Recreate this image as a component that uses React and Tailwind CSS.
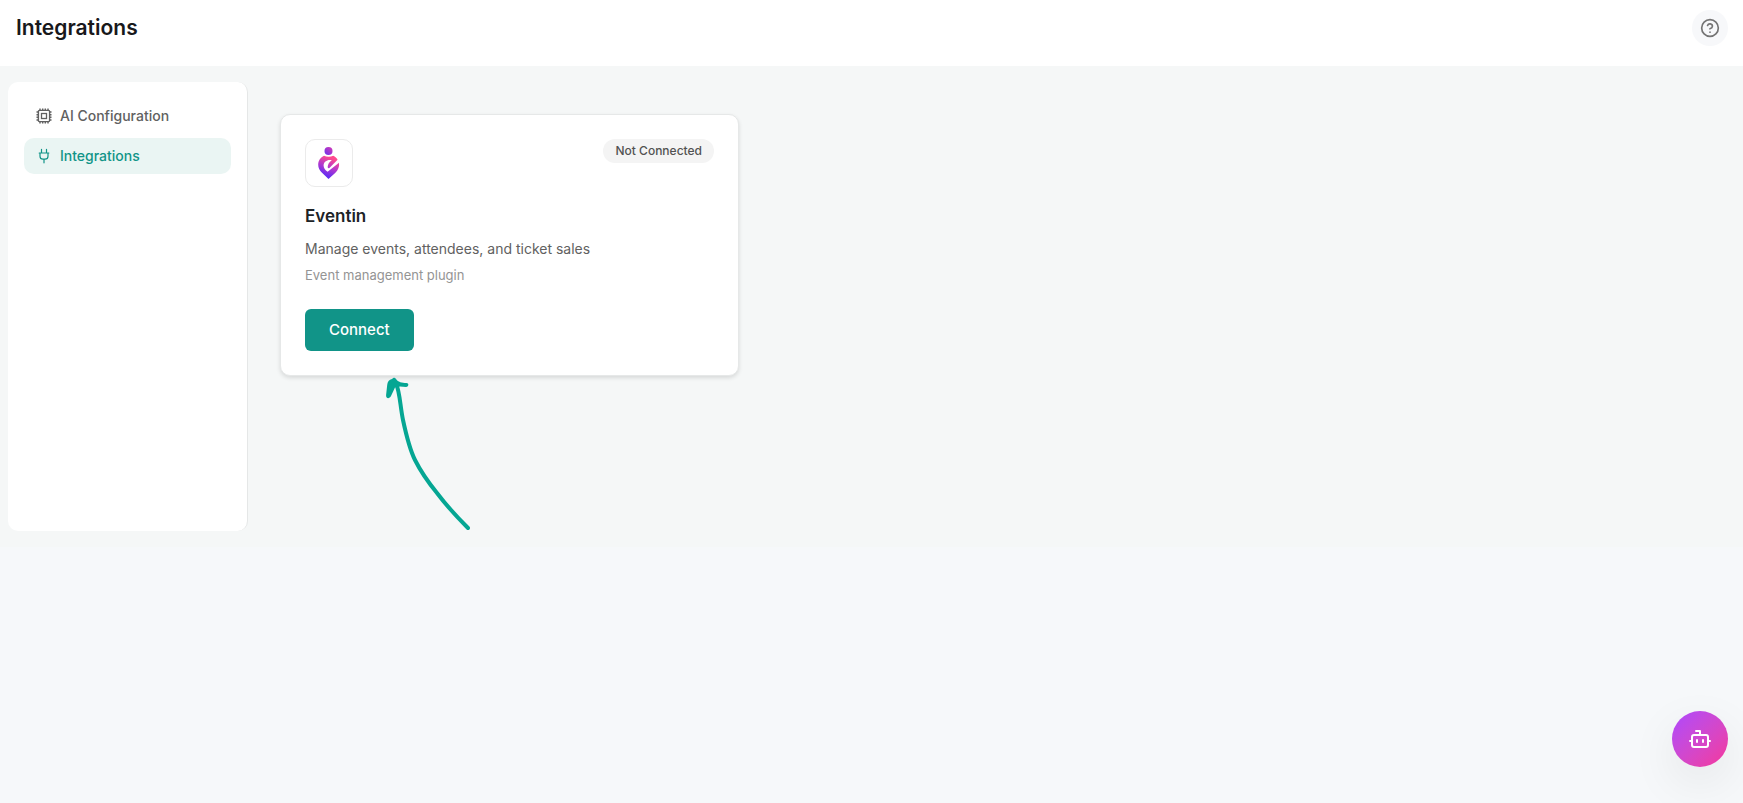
import React from "react";
import { Bot, CircleHelp } from "lucide-react";

const integrations = [
  {
    name: "Eventin",
    description: "Manage events, attendees, and ticket sales",
    type: "Event management plugin",
    connected: false,
  },
];

function ChipIcon() {
  return (
    <svg viewBox="0 0 16 16" className="size-4" fill="none" stroke="currentColor" aria-hidden="true">
      <rect x="2.4" y="2.4" width="11.2" height="11.2" rx="1" strokeWidth="1.4" />
      <rect x="5.5" y="5.5" width="5" height="5" strokeWidth="1.3" />
      <path
        d="M4 .5v2M6.7 .5v2M9.3 .5v2M12 .5v2M4 13.5v2M6.7 13.5v2M9.3 13.5v2M12 13.5v2M.5 4h2M.5 6.7h2M.5 9.3h2M.5 12h2M13.5 4h2M13.5 6.7h2M13.5 9.3h2M13.5 12h2"
        strokeWidth="1.4"
      />
    </svg>
  );
}

function PlugIcon() {
  return (
    <svg
      viewBox="0 0 16 16"
      className="size-4"
      fill="none"
      stroke="currentColor"
      strokeWidth="1.2"
      strokeLinecap="round"
      strokeLinejoin="round"
      aria-hidden="true"
    >
      <path d="M5.5 1.3v3.6M10.5 1.3v3.6M3.2 5h9.6M4 5v3.2c0 1.8 1.2 3 3 3h2c1.8 0 3-1.2 3-3V5M8 11.2v3.6" />
    </svg>
  );
}

function EventinLogo() {
  return (
    <svg viewBox="0 0 22 32" className="h-8 w-[22px]" aria-hidden="true">
      <defs>
        <linearGradient id="head" x1="0" y1="1" x2="1" y2="0">
          <stop stopColor="#6a2ff0" />
          <stop offset="1" stopColor="#d63bb4" />
        </linearGradient>
        <linearGradient id="pin" x1="0.3" y1="1" x2="0.7" y2="0">
          <stop offset="0.1" stopColor="#5b2cf5" />
          <stop offset="0.5" stopColor="#b138cf" />
          <stop offset="0.9" stopColor="#ff4a8d" />
        </linearGradient>
      </defs>
      <circle cx="10.5" cy="4" r="4" fill="url(#head)" />
      {/* outer pin with the spiral of the "e" left open */}
      <path
        d="M6 8.8C8.6 10 12.6 10 15.2 8.8C17.2 9.6 18.8 11 19.6 12.8L11.4 21C10.4 21.6 9.6 21 9.7 19.8C9.9 17 11 15.2 13.8 13.2C9.4 12.2 5.6 14.6 5.6 18.6C5.6 21 7.2 23.6 9.6 24.8L21 15.8C21.6 19.8 20 23.4 17.4 25.8L10.5 32L4 25.8C1.6 23.4 .2 21 .2 17.8C.2 13.6 2.6 10.4 6 8.8Z"
        fill="url(#pin)"
      />
    </svg>
  );
}

function HandDrawnArrow() {
  return (
    <svg
      viewBox="0 0 84 156"
      className="pointer-events-none absolute top-full left-[105px] h-[156px] w-[84px]"
      fill="none"
      aria-hidden="true"
    >
      <path
        d="M10 8C14 18 14 30 17 45C20 59 23 73 29 85C33 93 42 107 51 118C60 130 71 142 82 153"
        stroke="#05a693"
        strokeWidth="4"
        strokeLinecap="round"
      />
      <path
        d="M6 4C3 4.500 1.500 7 1.200 10L.1 20C-.2 24 3.500 24 5 21L9 12.500L14 11.500L20 12C23 11.500 23 8 20.500 8C16 8 12 7 10 4C8.500 2 7.500 3 6 4Z"
        fill="#05a693"
      />
    </svg>
  );
}

const navItems = [
  { label: "AI Configuration", icon: ChipIcon, active: false },
  { label: "Integrations", icon: PlugIcon, active: true },
];

function Sidebar() {
  return (
    <nav className="w-60 shrink-0 rounded-[10px] border-r border-[#e5e7e7] bg-white p-4">
      <ul className="flex flex-col gap-1">
        {navItems.map(({ label, icon: Icon, active }) => (
          <li key={label}>
            <a
              href="#"
              aria-current={active ? "page" : undefined}
              className={
                active
                  ? "flex h-9 items-center gap-2 rounded-[10px] bg-[#eaf5f3] px-3 text-sm font-medium text-[#119488]"
                  : "flex h-9 items-center gap-2 rounded-[10px] px-3 text-sm font-medium text-[#616161]"
              }
            >
              <Icon />
              {label}
            </a>
          </li>
        ))}
      </ul>
    </nav>
  );
}

function IntegrationCard({ name, description, type, connected }) {
  return (
    <article className="relative rounded-[10px] border border-[#e6e8e8] bg-white p-6 shadow-[0_2px_4px_rgba(0,0,0,0.12)]">
      <div className="flex items-start justify-between">
        <div className="flex size-12 items-center justify-center rounded-[10px] border border-[#ebebeb]">
          <EventinLogo />
        </div>
        <span className="rounded-full bg-[#f4f4f4] px-3 py-1 text-xs leading-4 font-medium text-[#525252]">
          {connected ? "Connected" : "Not Connected"}
        </span>
      </div>
      <h2 className="mt-4 text-[17px] leading-[26px] font-semibold text-[#1d2327]">{name}</h2>
      <p className="mt-2 text-sm leading-6 text-[#616161]">{description}</p>
      <p className="mt-1 text-[13px] leading-5 text-[#949494]">{type}</p>
      <button
        type="button"
        className="mt-6 block h-[42px] rounded-md bg-[#119488] px-6 text-[15px] font-medium text-white"
      >
        Connect
      </button>
      <HandDrawnArrow />
    </article>
  );
}

export default function App() {
  return (
    <div className="min-h-screen bg-[#f6f8fa] font-[Inter,sans-serif]">
      <header className="flex h-[66px] items-start justify-between bg-white pt-[10px] pr-[15px] pl-4">
        <h1 className="text-[21px] leading-9 font-semibold text-[#18181b]">Integrations</h1>
        <button
          type="button"
          aria-label="Help"
          className="flex size-9 items-center justify-center rounded-full bg-[#f7f8fa] text-[#747474]"
        >
          <CircleHelp size={20} strokeWidth={2} />
        </button>
      </header>

      <main className="flex min-h-[481px] bg-[#f5f7f7] px-2 py-4">
        <Sidebar />
        <section className="grid flex-1 grid-cols-3 items-start gap-6 py-8 pr-[30px] pl-8">
          {integrations.map((item) => (
            <IntegrationCard key={item.name} {...item} />
          ))}
        </section>
      </main>

      <button
        type="button"
        aria-label="Open assistant"
        className="fixed right-[15px] bottom-9 flex size-14 items-center justify-center rounded-full bg-linear-to-br from-[#ad46ff] to-[#f6339a] text-white shadow-[0_16px_48px_rgba(0,0,0,0.08)]"
      >
        <Bot size={24} strokeWidth={2} />
      </button>
    </div>
  );
}
